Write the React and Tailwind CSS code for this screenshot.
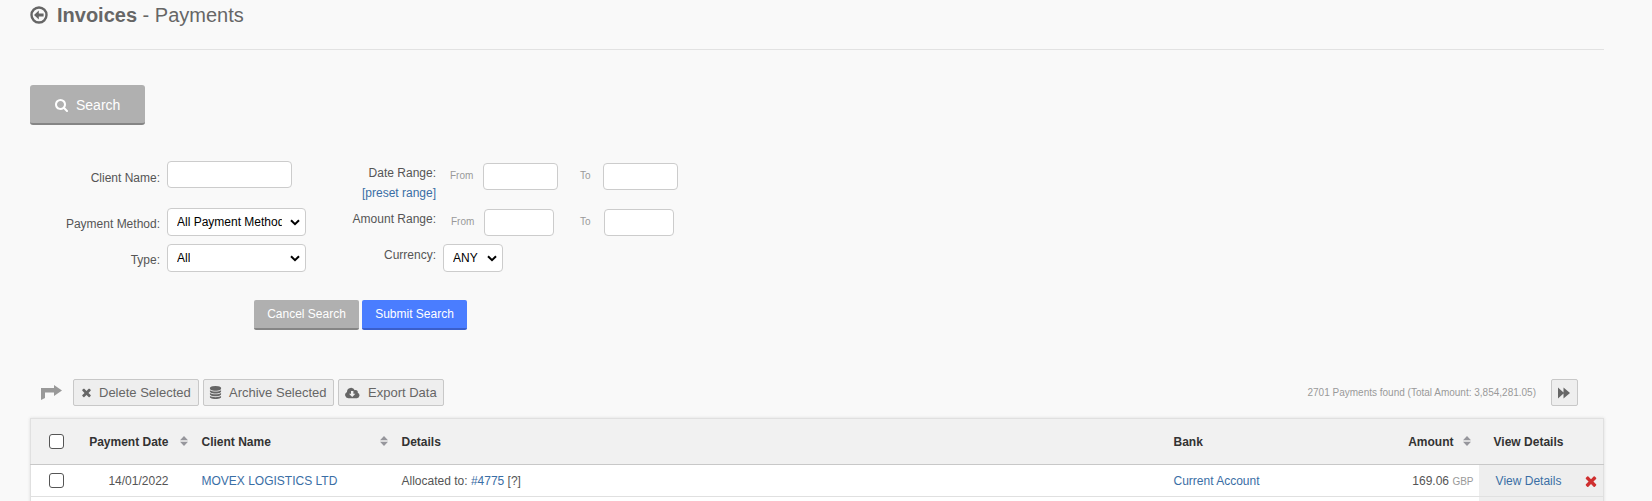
import React from "react";

const icons = {
  search: "M1152 832q0-185-131.5-316.5t-316.5-131.5-316.5 131.5-131.5 316.5 131.5 316.5 316.5 131.5 316.5-131.5 131.5-316.5zm512 832q0 52-38 90t-90 38q-54 0-90-38l-343-342q-179 124-399 124-143 0-273.5-55.5t-225-150-150-225-55.5-273.5 55.5-273.5 150-225 225-150 273.5-55.5 273.5 55.5 225 150 150 225 55.5 273.5q0 220-124 399l343 343q37 37 37 90z",
  times: "M1490 1322q0 40-28 68l-136 136q-28 28-68 28t-68-28l-294-294-294 294q-28 28-68 28t-68-28l-136-136q-28-28-28-68t28-68l294-294-294-294q-28-28-28-68t28-68l136-136q28-28 68-28t68 28l294 294 294-294q28-28 68-28t68 28l136 136q28 28 28 68t-28 68l-294 294 294 294q28 28 28 68z",
  database: "M896 768q237 0 443-43t325-127v170q0 69-103 128t-280 93.5-385 34.5-385-34.5-280-93.5-103-128v-170q119 84 325 127t443 43zm0 768q237 0 443-43t325-127v170q0 69-103 128t-280 93.5-385 34.5-385-34.5-280-93.5-103-128v-170q119 84 325 127t443 43zm0-384q237 0 443-43t325-127v170q0 69-103 128t-280 93.5-385 34.5-385-34.5-280-93.5-103-128v-170q119 84 325 127t443 43zm0-1152q208 0 385 34.5t280 93.5 103 128v128q0 69-103 128t-280 93.5-385 34.5-385-34.5-280-93.5-103-128v-128q0-69 103-128t280-93.5 385-34.5z",
};

function Icon({ name, className }) {
  return (
    <svg viewBox="0 0 1792 1792" fill="currentColor" className={`shrink-0 ${className}`}>
      <path d={icons[name]} />
    </svg>
  );
}

function BackIcon() {
  return (
    <svg viewBox="0 0 18 18" className="mt-px h-[18px] w-[18px] shrink-0" fill="none" stroke="currentColor">
      <circle cx="9" cy="9" r="7.5" strokeWidth="2.4" />
      <path d="M4 9 8.800 4.500v3h4.800v3H8.800v3z" fill="currentColor" stroke="none" />
    </svg>
  );
}

function CloudDownloadIcon() {
  return (
    <svg viewBox="0 0 15 12" className="h-[12px] w-[15px] shrink-0" fill="currentColor">
      <path
        fillRule="evenodd"
        d="M3.4 11.2A3.3 3.3 0 0 1 2 4.9 4 4 0 0 1 9.7 3.300a2.100 2.100 0 0 1 3 2.500 2.800 2.800 0 0 1-.800 5.400zM6 4v2.700H4L7.200 10l3.200-3.300h-2V4z"
      />
    </svg>
  );
}

function SortIcon() {
  return (
    <svg viewBox="0 0 8 10" className="mb-0.5 h-[10px] w-[8px] shrink-0 text-[#96969c]" fill="currentColor">
      <path d="M4 0 8 4.300H0zM4 10 0 5.700h8z" />
    </svg>
  );
}

function TextInput({ className }) {
  return (
    <input
      type="text"
      className={`h-[27px] rounded border border-[#ccc] bg-white ${className}`}
    />
  );
}

function Select({ value, className }) {
  return (
    <div
      className={`
        flex h-7 items-center justify-between
        rounded border border-[#ccc] bg-white
        pl-[9px] pr-[5px] text-black
        ${className}
      `}
    >
      <span className="mr-[8px] overflow-hidden whitespace-nowrap">{value}</span>
      <svg viewBox="0 0 10 7" className="mt-px h-[7px] w-[10px] shrink-0" fill="none" stroke="currentColor" strokeWidth="2">
        <path d="M1 1.200 5 5.200 9 1.200" />
      </svg>
    </div>
  );
}

function ToolButton({ icon, label, className }) {
  return (
    <button
      className={`
        flex h-[27px] items-center
        rounded-[2px] border border-[#c8c8c8] bg-[#eee]
        text-[13px] text-[#666] whitespace-nowrap
        ${className}
      `}
    >
      {icon}
      {label}
    </button>
  );
}

function Checkbox() {
  return (
    <input
      type="checkbox"
      className="block h-[15px] w-[15px] appearance-none rounded-[3px] border border-[#555] bg-white"
    />
  );
}

export default function App() {
  return (
    <div className="
      h-[501px] w-full overflow-hidden
      bg-[#f9f9f9] pl-[30px] pr-12
      font-['Liberation_Sans',Arial,sans-serif]
      text-xs text-[#555]
    ">

      {/* Title */}

      <header className="flex h-[50px] items-start border-b border-[#e2e2e2] pt-[5px] text-[#666]">
        <BackIcon />
        <h1 className="ml-[9px] text-xl leading-5">
          <b>Invoices</b> - Payments
        </h1>
      </header>

      <button className="
        mt-[35px] flex h-10 w-[115px] items-center
        rounded-[3px] border-b-2 border-[#858585] bg-[#b0b0b0]
        pl-[25px] pt-0.5 text-sm text-white
      ">
        <Icon name="search" className="mr-[7px] h-[14px] w-[14px]" />
        Search
      </button>

      {/* Search form */}

      <form className="mt-9 flex h-[111px]">

        <div className="w-[276px]">
          <div className="flex h-[46px] items-start">
            <label className="w-[130px] pt-[9px] text-right leading-4">Client Name:</label>
            <TextInput className="ml-[7px] w-[125px]" />
          </div>

          <div className="flex h-9 items-start">
            <label className="w-[130px] pt-[9px] text-right leading-4">Payment Method:</label>
            <Select value="All Payment Methods" className="ml-[7px] mt-px w-[139px]" />
          </div>

          <div className="flex items-start">
            <label className="w-[130px] pt-[9px] text-right leading-4">Type:</label>
            <Select value="All" className="ml-[7px] mt-px w-[139px]" />
          </div>
        </div>

        <div className="w-[400px]">
          <div className="flex h-[46px] items-start">
            <label className="w-[130px] pt-0.5 text-right leading-5">
              Date Range:
              <br />
              <a className="text-[#3a6ea5]">[preset range]</a>
            </label>
            <span className="ml-[14px] w-[33px] pt-[9px] text-[10px] leading-3 text-[#999]">From</span>
            <TextInput className="mt-0.5 w-[75px]" />
            <span className="ml-[22px] w-[23px] pt-[9px] text-[10px] leading-3 text-[#999]">To</span>
            <TextInput className="mt-0.5 w-[75px]" />
          </div>

          <div className="flex h-9 items-start">
            <label className="w-[130px] pt-0.5 text-right leading-5">Amount Range:</label>
            <span className="ml-[15px] w-[33px] pt-[9px] text-[10px] leading-3 text-[#999]">From</span>
            <TextInput className="mt-0.5 w-[70px]" />
            <span className="ml-[26px] w-[24px] pt-[9px] text-[10px] leading-3 text-[#999]">To</span>
            <TextInput className="mt-0.5 w-[70px]" />
          </div>

          <div className="flex items-start">
            <label className="w-[130px] pt-0.5 text-right leading-5">Currency:</label>
            <Select value="ANY" className="ml-[7px] mt-px w-[60px]" />
          </div>
        </div>
      </form>

      <div className="mt-7 flex gap-[3px] pl-56 text-white">
        <button className="h-[30px] w-[105px] rounded-[2px] border-b-2 border-[#858585] bg-[#b0b0b0]">
          Cancel Search
        </button>
        <button className="h-[30px] w-[105px] rounded-[2px] border-b-2 border-[#3a5fcb] bg-[#4a7dff]">
          Submit Search
        </button>
      </div>

      {/* Bulk actions */}

      <div className="mt-[49px] flex h-[27px] items-center pl-[11px] pr-[26px]">
        <svg viewBox="0 0 21 15" className="mr-[11px] h-[15px] w-[21px] shrink-0 text-[#999]" fill="currentColor">
          <path d="M0 3h13V0l8 5.500-8 5.500V7.500H4V13l-4 2z" />
        </svg>

        <div className="flex gap-1">
          <ToolButton
            icon={<Icon name="times" className="mr-[6px] h-[13px] w-[13px]" />}
            label="Delete Selected"
            className="w-[126px] pl-[6px]"
          />
          <ToolButton
            icon={<Icon name="database" className="mr-[7px] h-[13px] w-[13px]" />}
            label="Archive Selected"
            className="w-[131px] pl-[5px]"
          />
          <ToolButton
            icon={<span className="mr-[8px]"><CloudDownloadIcon /></span>}
            label="Export Data"
            className="w-[106px] pl-[6px]"
          />
        </div>

        <span className="ml-auto mr-[15px] text-[10px] text-[#999]">
          2701 Payments found (Total Amount: 3,854,281.05)
        </span>
        <button className="
          flex h-[27px] w-[27px] items-center justify-center
          rounded-[2px] border border-[#c8c8c8] bg-[#eee] text-[#666]
        ">
          <svg viewBox="0 0 12 12" className="mr-0.5 h-[12px] w-[12px]" fill="currentColor">
            <path d="M0 .500 5.500 5.500v-5L12 6l-6.500 5.500v-5L0 11.500z" />
          </svg>
        </button>
      </div>

      {/* Payments table */}

      <table className="mt-3 w-full table-fixed border border-[#e0e0e0] bg-white shadow-[0_0_3px_#ddd]">
        <colgroup>
          <col className="w-[45px]" />
          <col className="w-[117px]" />
          <col className="w-[200px]" />
          <col />
          <col className="w-[205px]" />
          <col className="w-[109px]" />
          <col className="w-[98px]" />
          <col className="w-[27px]" />
        </colgroup>

        <thead>
          <tr className="h-[46px] border-b border-[#c8c8c8] bg-[#f1f1f1] text-left text-[#333]">
            <th className="pl-[18px]"><Checkbox /></th>
            <th>
              <div className="flex items-center justify-end gap-[11px] pr-[5px]">
                Payment Date <SortIcon />
              </div>
            </th>
            <th>
              <div className="flex items-center justify-between pl-[9px] pr-[5px]">
                Client Name <SortIcon />
              </div>
            </th>
            <th className="pl-[9px]">Details</th>
            <th className="pl-[9px]">Bank</th>
            <th>
              <div className="flex items-center justify-end gap-[9px] pr-[8px]">
                Amount <SortIcon />
              </div>
            </th>
            <th className="pl-[2px] text-center">View Details</th>
            <th></th>
          </tr>
        </thead>

        <tbody>
          <tr className="h-8 border-b border-[#e0e0e0]">
            <td className="pl-[18px]"><Checkbox /></td>
            <td className="pr-[24px] text-right">14/01/2022</td>
            <td className="pl-[9px] text-[#3a6ea5]">MOVEX LOGISTICS LTD</td>
            <td className="pl-[9px]">
              Allocated to: <a className="text-[#3a6ea5]">#4775</a> [?]
            </td>
            <td className="pl-[9px] text-[#3a6ea5]">Current Account</td>
            <td className="pr-[5px] text-right">
              169.06 <span className="text-[10px] text-[#999]">GBP</span>
            </td>
            <td className="bg-[#eee] pl-[2px] text-center text-[#3a6ea5]">View Details</td>
            <td className="bg-[#eee] pl-[6px] text-[#cf2f2f]">
              <Icon name="times" className="h-[16px] w-[16px]" />
            </td>
          </tr>
          <tr className="h-8">
            <td colSpan={6}></td>
            <td colSpan={2} className="bg-[#eee]"></td>
          </tr>
        </tbody>
      </table>
    </div>
  );
}
